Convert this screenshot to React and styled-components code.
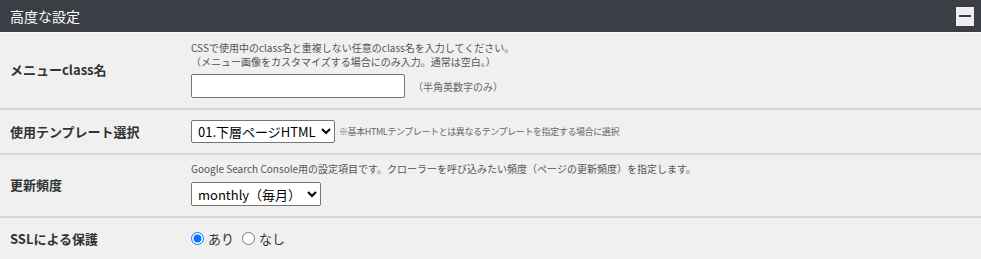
import { createGlobalStyle, styled } from "styled-components";

const GlobalStyle = createGlobalStyle`
   body {
      margin: 0;
      background: #ffffff;
      font-family: "Noto Sans CJK JP", "Noto Sans", sans-serif;
   }
`;

const Panel = styled.section`
   width: 981px;
   background: #f0f0f0;
`;

const Header = styled.header`
   display: flex;
   align-items: center;
   justify-content: space-between;
   height: 33px;
   padding: 0 7px 0 10px;
   box-sizing: border-box;
   background: #3b3e45;
   border-bottom: 1px solid #fafafa;
`;

const Title = styled.h2`
   margin: 0;
   font-size: 14px;
   font-weight: 400;
   color: #ffffff;
`;

const Toggle = styled.button`
   display: flex;
   align-items: center;
   justify-content: center;
   width: 18px;
   height: 19px;
   padding: 0;
   border: none;
   background: #eeeeee;
   cursor: pointer;

   &::before {
      content: "";
      width: 12px;
      height: 2px;
      background: #3b3e45;
   }
`;

const Row = styled.div`
   display: grid;
   grid-template-columns: 191px 1fr;
   align-items: center;
   padding: ${(p) => p.$pad || "8px 0"};
   border-bottom: 2px solid #d6d6d6;

   &:last-child {
      border-bottom: none;
   }
`;

const Label = styled.div`
   padding-left: 10px;
   font-size: 13px;
   font-weight: 700;
   color: #333333;
`;

const Field = styled.div`
   display: flex;
   flex-direction: column;
   align-items: flex-start;
   gap: ${(p) => p.$gap || "6px"};
`;

const Line = styled.div`
   display: flex;
   align-items: center;
   gap: ${(p) => p.$gap || "10px"};
`;

const Note = styled.p`
   margin: 0;
   font-size: 10px;
   line-height: 14px;
   color: #555555;
`;

const Hint = styled.span`
   font-size: ${(p) => p.$size || "10px"};
   color: #666666;
   letter-spacing: ${(p) => p.$tight ? "-0.4px" : "0"};
`;

const TextInput = styled.input`
   width: 214px;
   height: 24px;
   box-sizing: border-box;
   border: 1px solid #767676;
   border-radius: 2px;
   background: #ffffff;
`;

const Select = styled.select`
   height: ${(p) => p.$h || "24px"};
   padding: 0 2px;
   border: 1px solid #767676;
   border-radius: 2px;
   background: #ffffff;
   font-family: "Noto Sans CJK JP", sans-serif;
   font-size: 13px;
   color: #000000;
`;

const Radios = styled.div`
   display: flex;
   align-items: center;
   gap: 8px;
   font-size: 13px;
   color: #333333;
`;

const RadioLabel = styled.label`
   display: flex;
   align-items: center;
   gap: 2px;

   & > input {
      margin: 0 2px 0 0;
      width: 13px;
      height: 13px;
   }
`;

export default function App() {
   return (
      <>
         <GlobalStyle />
         <Panel>
            <Header>
               <Title>高度な設定</Title>
               <Toggle aria-label="閉じる" />
            </Header>

            <Row $pad="8px 0 10px">
               <Label>メニューclass名</Label>
               <Field $gap="5px">
                  <Note>
                     CSSで使用中のclass名と重複しない任意のclass名を入力してください。<br />
                     （メニュー画像をカスタマイズする場合にのみ入力。通常は空白。）
                  </Note>
                  <Line $gap="8px">
                     <TextInput type="text" />
                     <Hint>（半角英数字のみ）</Hint>
                  </Line>
               </Field>
            </Row>

            <Row $pad="10px 0 10px">
               <Label>使用テンプレート選択</Label>
               <Line $gap="4px">
                  <Select $h="23px" defaultValue="01">
                     <option value="01">01.下層ページHTML</option>
                  </Select>
                  <Hint $size="9px" $tight>※基本HTMLテンプレートとは異なるテンプレートを指定する場合に選択</Hint>
               </Line>
            </Row>

            <Row $pad="7px 0 10px">
               <Label>更新頻度</Label>
               <Field $gap="6px">
                  <Note>Google Search Console用の設定項目です。クローラーを呼び込みたい頻度（ページの更新頻度）を指定します。</Note>
                  <Select defaultValue="monthly">
                     <option value="monthly">monthly（毎月）</option>
                  </Select>
               </Field>
            </Row>

            <Row $pad="11px 0 12px">
               <Label>SSLによる保護</Label>
               <Radios>
                  <RadioLabel>
                     <input type="radio" name="ssl" defaultChecked />
                     あり
                  </RadioLabel>
                  <RadioLabel>
                     <input type="radio" name="ssl" />
                     なし
                  </RadioLabel>
               </Radios>
            </Row>
         </Panel>
      </>
   );
}
